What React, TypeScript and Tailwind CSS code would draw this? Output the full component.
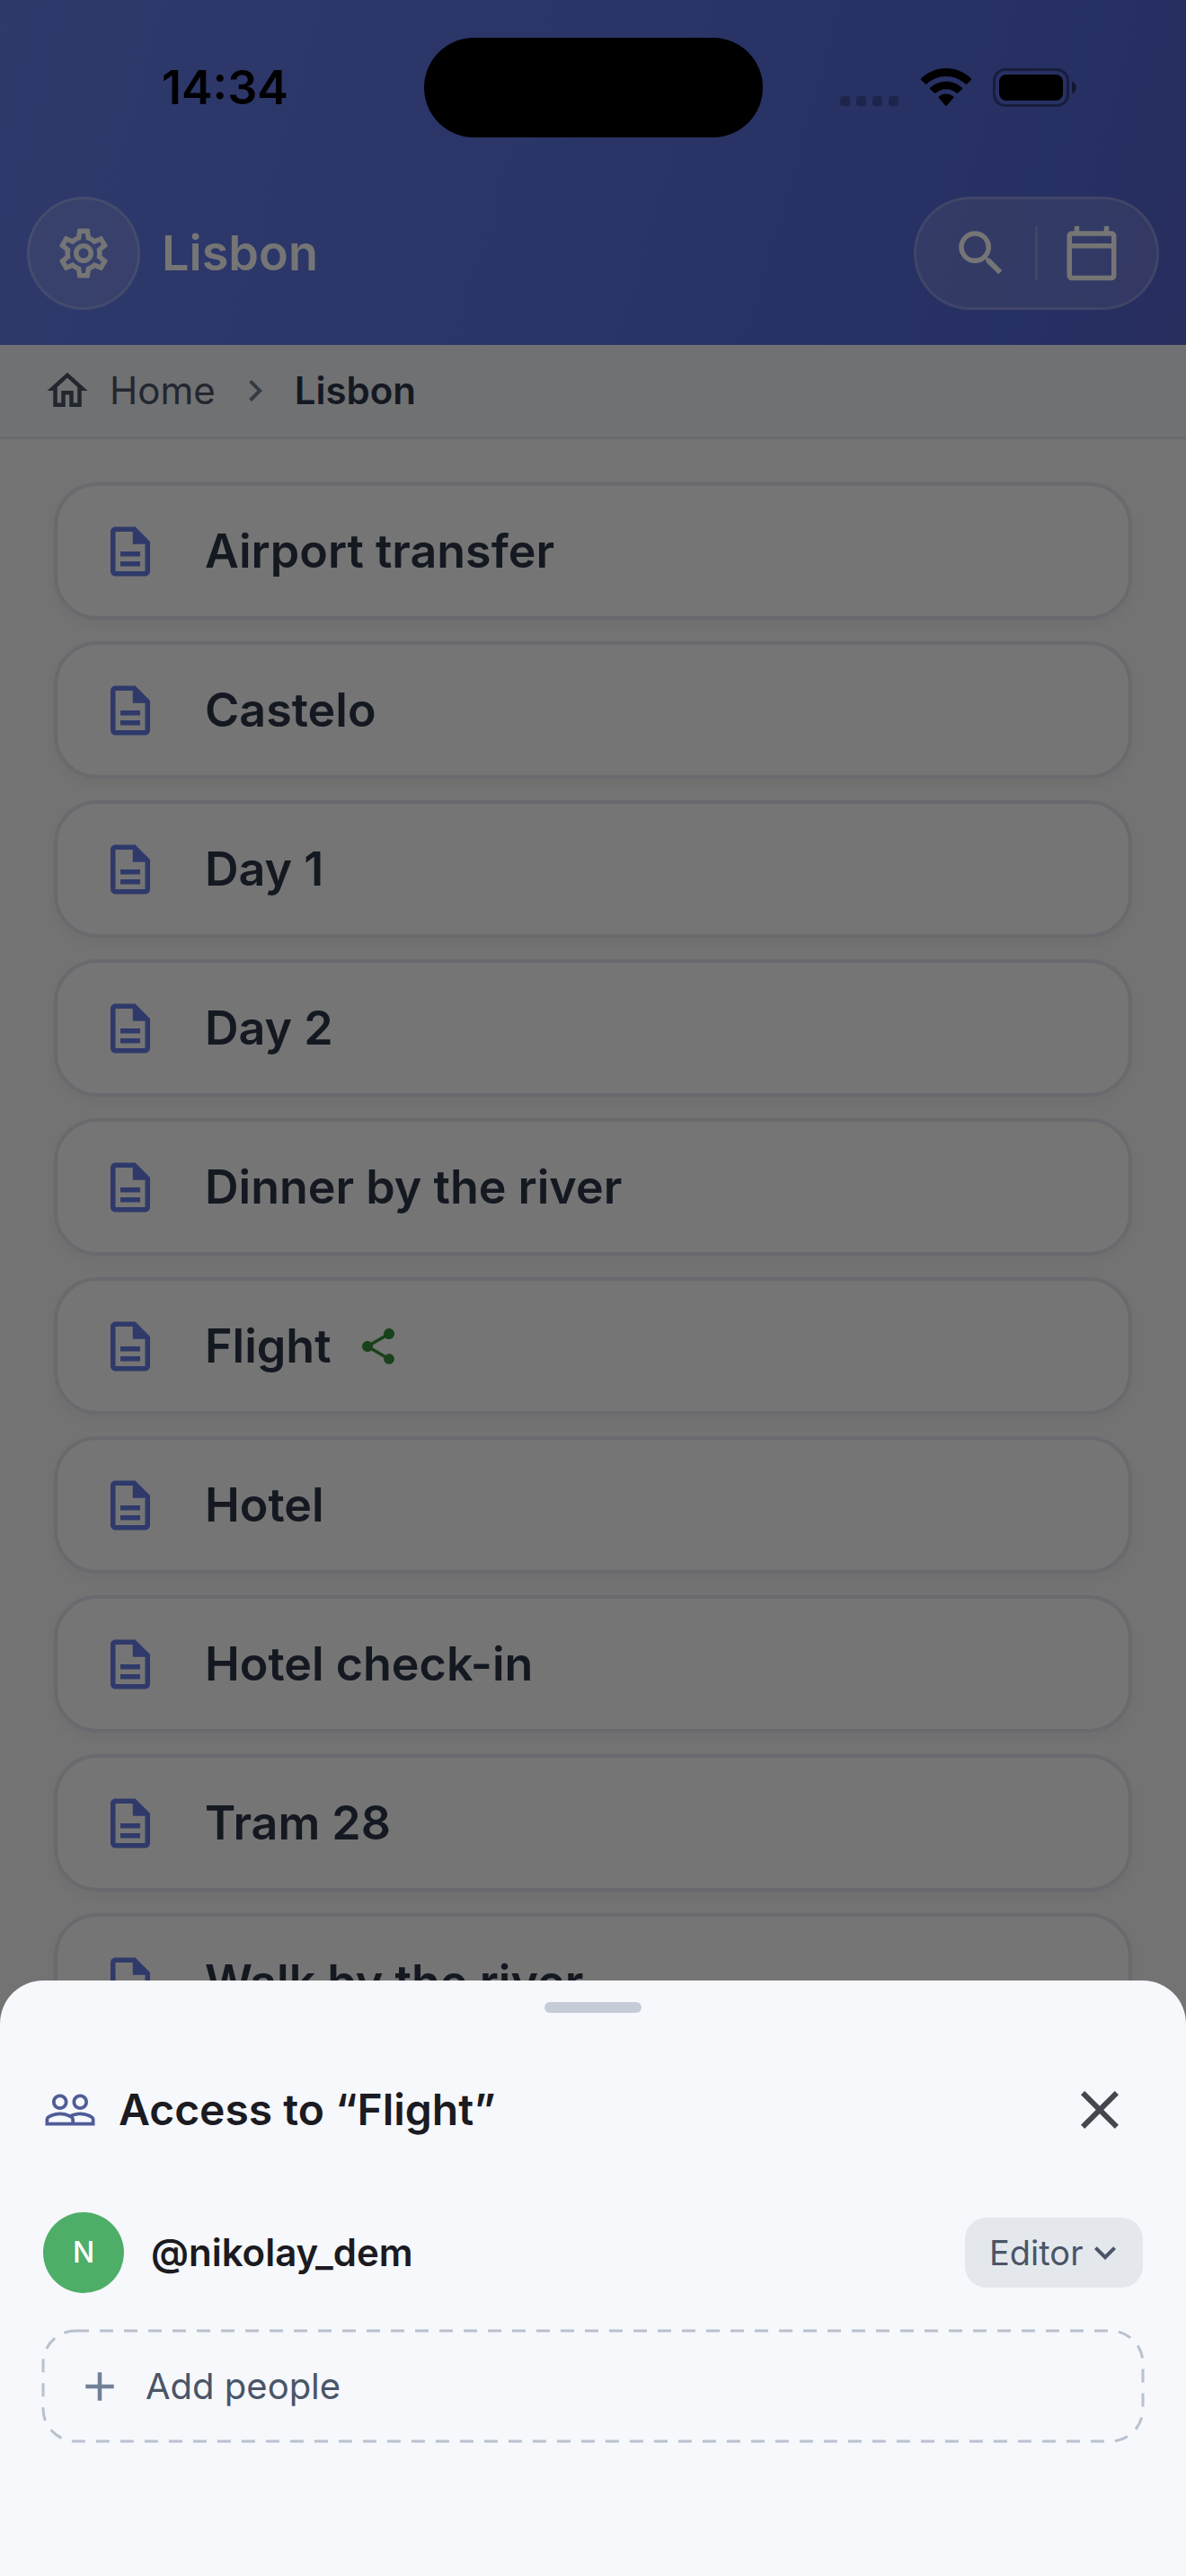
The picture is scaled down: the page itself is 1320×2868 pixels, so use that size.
import {
  MdAdd,
  MdChevronRight,
  MdClose,
  MdKeyboardArrowDown,
  MdOutlineCalendarToday,
  MdOutlineDescription,
  MdOutlineHome,
  MdOutlineSettings,
  MdPeopleOutline,
  MdSearch,
  MdShare,
} from 'react-icons/md';

const notes = [
  { title: 'Airport transfer' },
  { title: 'Castelo' },
  { title: 'Day 1' },
  { title: 'Day 2' },
  { title: 'Dinner by the river' },
  { title: 'Flight', shared: true },
  { title: 'Hotel' },
  { title: 'Hotel check-in' },
  { title: 'Tram 28' },
  { title: 'Walk by the river' },
];

function StatusBar() {
  return (
    <div className="grid h-[111px] grid-cols-[1fr_auto_1fr] items-center">
      <div className="pl-[180px] text-[52px] leading-none font-semibold text-black">14:34</div>
      <div className="h-full w-[377px] rounded-full bg-black" />
      <div className="flex items-end justify-end gap-[23px] pr-[122px]">
        <svg width="66" height="12" viewBox="0 0 66 12" className="fill-black/25">
          <rect x="0" width="11" height="11" rx="3" />
          <rect x="18" width="11" height="11" rx="3" />
          <rect x="36" width="11" height="11" rx="3" />
          <rect x="54" width="11" height="11" rx="3" />
        </svg>
        <svg width="58" height="43" viewBox="0 0 58 43" fill="black">
          <path d="M29 9c8.300 0 15.800 3.200 21.400 8.500.5.500 1.200.5 1.600 0l4.900-4.500c.4-.4.400-1 0-1.400C41.600-3.800 16.400-3.800 1.100 11.600c-.4.400-.4 1 0 1.400L6 17.500c.4.500 1.100.5 1.600 0C13.200 12.200 20.700 9 29 9z" />
          <path d="M29 23.200c4.400 0 8.400 1.700 11.400 4.400.5.500 1.200.5 1.700 0l4.800-4.400c.4-.4.400-1.100 0-1.500-10-9.400-25.800-9.400-35.800 0-.4.400-.4 1.100 0 1.500l4.800 4.400c.5.500 1.200.5 1.700 0 3-2.700 7-4.400 11.400-4.400z" />
          <path d="M37.200 33c.4-.4.400-1.100 0-1.500-4.700-4-11.700-4-16.400 0-.4.400-.4 1.100 0 1.500l7.400 8.500c.4.500 1.200.5 1.600 0z" />
        </svg>
        <svg width="93" height="43" viewBox="0 0 93 43">
          <rect x="1.500" y="1.500" width="82" height="40" rx="12.500" fill="none" stroke="black" strokeOpacity="0.400" strokeWidth="3" />
          <rect x="7" y="7" width="71" height="29" rx="8" />
          <path d="M88 14.500c3 1.200 5 4 5 7s-2 5.800-5 7z" fillOpacity="0.500" />
        </svg>
      </div>
    </div>
  );
}

function AppHeader() {
  return (
    <header className="bg-linear-106 from-[#667eea] via-[#5568d6] via-90% to-[#5764cd] pt-[42px] pb-[39px] text-white">
      <StatusBar />
      <div className="mt-[66px] flex items-center px-[30px]">
        <button
          aria-label="Settings"
          className="flex size-[126px] items-center justify-center rounded-full border-3 border-white/20 bg-white/15"
        >
          <MdOutlineSettings size={66} />
        </button>
        <h1 className="ml-6 text-[54px] leading-none font-semibold">Lisbon</h1>
        <div className="ml-auto flex h-[126px] items-center gap-[27px] rounded-full border-3 border-white/20 bg-white/15 px-[39px]">
          <button aria-label="Search">
            <MdSearch size={66} />
          </button>
          <div className="h-[60px] w-[3px] bg-white/20" />
          <button aria-label="Calendar">
            <MdOutlineCalendarToday size={66} />
          </button>
        </div>
      </div>
    </header>
  );
}

function Breadcrumbs() {
  return (
    <nav
      aria-label="Breadcrumb"
      className="flex h-[105px] items-center gap-5 border-b-3 border-[#e2e8f0] bg-[#f4f6f9] px-12 text-[42px] leading-none"
    >
      <a href="#home" className="flex items-center gap-5 text-[#4a5568]">
        <MdOutlineHome size={54} />
        Home
      </a>
      <MdChevronRight size={48} className="text-[#718096]" />
      <span className="font-semibold text-[#2d3748]">Lisbon</span>
    </nav>
  );
}

function NoteList() {
  return (
    <ul className="flex flex-col gap-6 px-15 py-12">
      {notes.map((note) => (
        <li key={note.title}>
          <button className="flex h-[153px] w-full items-center rounded-[48px] border-4 border-[#e2e8f0] bg-white px-12 text-left shadow-[0_6px_12px_rgba(0,0,0,0.04)]">
            <MdOutlineDescription size={66} className="text-[#667eea]" />
            <span className="ml-[50px] text-[52px] leading-none font-semibold text-[#2d3748]">{note.title}</span>
            {note.shared && <MdShare size={48} className="ml-7 text-[#388e3c]" />}
          </button>
        </li>
      ))}
    </ul>
  );
}

function AccessSheet() {
  return (
    <section
      role="dialog"
      aria-labelledby="sheet-title"
      className="fixed inset-x-0 bottom-0 rounded-t-[48px] bg-[#f6f8fc] px-12 pt-6 pb-[150px]"
    >
      <div className="mx-auto h-3 w-[108px] rounded-full bg-[#c5ccd8]" />

      <div className="mt-9 flex h-36 items-center">
        <MdPeopleOutline size={60} className="text-[#4f5c97]" />
        <h2 id="sheet-title" className="ml-6 text-[48px] leading-none font-semibold text-[#1b1b21]">
          Access to “Flight”
        </h2>
        <button aria-label="Close" className="ml-auto p-3 text-[#46464f]">
          <MdClose size={72} />
        </button>
      </div>

      <div className="mt-[42px] flex items-center">
        <div className="flex size-[90px] items-center justify-center rounded-full bg-[#4eae68] text-[32px] leading-none font-medium text-white">
          N
        </div>
        <label htmlFor="role" className="ml-[30px] text-[42px] leading-none font-semibold text-[#1b1b21]">
          @nikolay_dem
        </label>
        <div className="relative ml-auto">
          <select
            id="role"
            defaultValue="Editor"
            className="h-[78px] w-[198px] appearance-none rounded-3xl bg-[#e4e8ec] pl-[27px] text-[38px] text-[#4a5568]"
          >
            <option>Editor</option>
            <option>Viewer</option>
          </select>
          <MdKeyboardArrowDown size={48} className="pointer-events-none absolute top-[15px] right-[18px] text-[#4a5568]" />
        </div>
      </div>

      <button className="relative mt-[42px] flex h-[123px] w-full items-center gap-6 px-9 text-[40px] leading-none text-[#4a5568]">
        <svg className="absolute inset-0 size-full overflow-visible" fill="none" stroke="#b8c2ce" strokeWidth="3">
          <rect width="100%" height="100%" rx="36" strokeDasharray="15 12" />
        </svg>
        <MdAdd size={54} className="text-[#718096]" />
        Add people
      </button>
    </section>
  );
}

export default function App() {
  return (
    <div className="min-h-screen bg-[#fafafa] font-['Inter',sans-serif]">
      <AppHeader />
      <Breadcrumbs />
      <main>
        <NoteList />
      </main>
      <div className="fixed inset-0 bg-black/54" />
      <AccessSheet />
    </div>
  );
}
